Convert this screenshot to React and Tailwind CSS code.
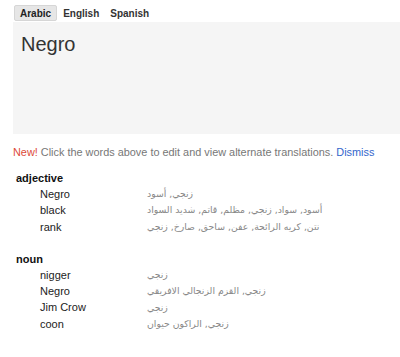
export default function App() {
  const sections = [
    {
      pos: "adjective",
      rows: [
        ["Negro", "زنجي, أسود"],
        ["black", "أسود, سواد, زنجي, مظلم, قاتم, شديد السواد"],
        ["rank", "نتن, كريه الرائحة, عفن, ساحق, صارخ, زنجي"],
      ],
    },
    {
      pos: "noun",
      rows: [
        ["nigger", "زنجي"],
        ["Negro", "زنجي, القزم الزنجالي الافريقي"],
        ["Jim Crow", "زنجي"],
        ["coon", "زنجي, الراكون حيوان"],
      ],
    },
  ];
  return (
    <div className="w-[400px] h-[357px] bg-white overflow-hidden font-['Liberation_Sans',Arial,sans-serif]">
      <div className="flex items-center pl-[14px] pt-[4px] h-[22px]">
        <div className="h-[16px] px-[5px] flex items-center bg-[#e6e6e6] border border-[#d6d6d6] rounded-[2px] text-[10px] font-bold text-[#222]">
          Arabic
        </div>
        <div className="h-[16px] px-[6px] flex items-center text-[10px] font-bold text-[#333]">English</div>
        <div className="h-[16px] px-[5px] flex items-center text-[10px] font-bold text-[#333]">Spanish</div>
      </div>
      <div className="ml-[13px] h-[112px] bg-[#f5f5f5] pl-[8px] pt-[9px]">
        <div className="text-[20px] leading-[26px] text-[#333]">Negro</div>
      </div>
      <div className="pl-[13px] pt-[11px] text-[10.9px] leading-[15px] text-[#777] whitespace-nowrap">
        <span className="text-[#dd4b39]">New!</span> Click the words above to edit and view alternate translations.{" "}
        <span className="text-[#3366cc]">Dismiss</span>
      </div>
      <div className="pl-[16px] pt-[10px] flex flex-col gap-[16px]">
        {sections.map((s) => (
          <div key={s.pos}>
            <div className="text-[11px] leading-[16px] font-bold text-[#111]">{s.pos}</div>
            {s.rows.map(([en, ar], i) => (
              <div key={i} className="flex items-center h-[16.3px]">
                <div className="w-[131px] pl-[24px] text-[11px] text-[#222]">{en}</div>
                <div
                  dir="rtl"
                  className="text-[9.3px] text-[#888] font-['DejaVu_Sans','Noto_Sans',sans-serif]"
                >
                  {ar}
                </div>
              </div>
            ))}
          </div>
        ))}
      </div>
    </div>
  );
}
